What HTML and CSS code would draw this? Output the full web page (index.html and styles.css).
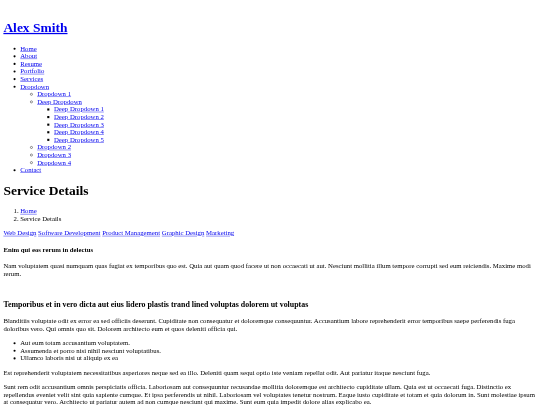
FILE: index.html
```html
<!DOCTYPE html>
<html lang="en">
<head>
<meta charset="utf-8">
<title>Service Details - Alex Smith</title>
<link rel="stylesheet" href="styles.css">
</head>
<body>
<div class="page">
<header>
<h1><a href="#">Alex Smith</a></h1>
<nav>
<ul>
<li><a href="#">Home</a></li>
<li><a href="#">About</a></li>
<li><a href="#">Resume</a></li>
<li><a href="#">Portfolio</a></li>
<li><a href="#">Services</a></li>
<li><a href="#">Dropdown</a>
<ul>
<li><a href="#">Dropdown 1</a></li>
<li><a href="#">Deep Dropdown</a>
<ul>
<li><a href="#">Deep Dropdown 1</a></li>
<li><a href="#">Deep Dropdown 2</a></li>
<li><a href="#">Deep Dropdown 3</a></li>
<li><a href="#">Deep Dropdown 4</a></li>
<li><a href="#">Deep Dropdown 5</a></li>
</ul>
</li>
<li><a href="#">Dropdown 2</a></li>
<li><a href="#">Dropdown 3</a></li>
<li><a href="#">Dropdown 4</a></li>
</ul>
</li>
<li><a href="#">Contact</a></li>
</ul>
</nav>
</header>
<main>
<h1>Service Details</h1>
<ol>
<li><a href="#">Home</a></li>
<li>Service Details</li>
</ol>
<div>
<a href="#">Web Design</a>
<a href="#">Software Development</a>
<a href="#">Product Management</a>
<a href="#">Graphic Design</a>
<a href="#">Marketing</a>
</div>
<h4>Enim qui eos rerum in delectus</h4>
<p>Nam voluptatem quasi numquam quas fugiat ex temporibus quo est. Quia aut quam quod facere ut non occaecati ut aut. Nesciunt mollitia illum tempore corrupti sed eum reiciendis. Maxime modi rerum.</p>
<h3 class="spaced">Temporibus et in vero dicta aut eius lidero plastis trand lined voluptas dolorem ut voluptas</h3>
<p>Blanditiis voluptate odit ex error ea sed officiis deserunt. Cupiditate non consequatur et doloremque consequuntur. Accusantium labore reprehenderit error temporibus saepe perferendis fuga doloribus vero. Qui omnis quo sit. Dolorem architecto eum et quos deleniti officia qui.</p>
<ul>
<li>Aut eum totam accusantium voluptatem.</li>
<li>Assumenda et porro nisi nihil nesciunt voluptatibus.</li>
<li>Ullamco laboris nisi ut aliquip ex ea</li>
</ul>
<p>Est reprehenderit voluptatem necessitatibus asperiores neque sed ea illo. Deleniti quam sequi optio iste veniam repellat odit. Aut pariatur itaque nesciunt fuga.</p>
<p>Sunt rem odit accusantium omnis perspiciatis officia. Laboriosam aut consequuntur recusandae mollitia doloremque est architecto cupiditate ullam. Quia est ut occaecati fuga. Distinctio ex repellendus eveniet velit sint quia sapiente cumque. Et ipsa perferendis ut nihil. Laboriosam vel voluptates tenetur nostrum. Eaque iusto cupiditate et totam et quia dolorum in. Sunt molestiae ipsum at consequatur vero. Architecto ut pariatur autem ad non cumque nesciunt qui maxime. Sunt eum quia impedit dolore alias explicabo ea.</p>
</main>
</div>
</body>
</html>
```
FILE: styles.css
```css
html, body {
  margin: 0;
  padding: 0;
  width: 540px;
  height: 405px;
  overflow: hidden;
  background: #fff;
}
.page {
  width: 1264px;
  height: 926px;
  overflow: hidden;
  padding: 26px 8px 8px;
  font-family: "Liberation Serif", "Times New Roman", serif;
  font-size: 16px;
  color: #000;
  transform: scale(0.421875);
  transform-origin: 0 0;
  filter: blur(1px);
}
a {
  color: #0000ee;
}
.spaced {
  margin-top: 53px;
}
```
